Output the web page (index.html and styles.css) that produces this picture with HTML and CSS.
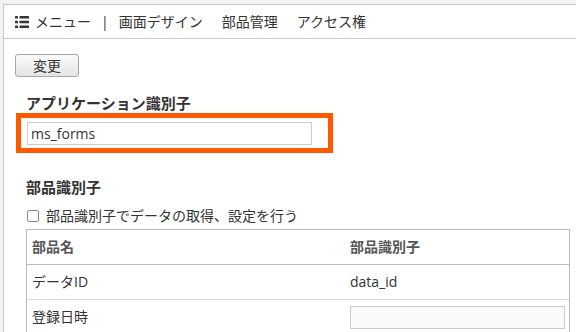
FILE: index.html
```html
<!DOCTYPE html>
<html lang="ja">
<head>
    <meta charset="UTF-8">
    <title>アプリケーション設定</title>
    <link rel="stylesheet" href="styles.css">
</head>
<body>
    <div class="panel">
        <div class="nav">
            <svg class="nav-icon" width="14" height="12" viewBox="0 0 14 12">
                <rect x="0" y="0" width="3" height="2.6" rx="0.6"/>
                <rect x="4.5" y="0" width="9.5" height="2.6" rx="0.6"/>
                <rect x="0" y="4.7" width="3" height="2.6" rx="0.6"/>
                <rect x="4.5" y="4.7" width="9.5" height="2.6" rx="0.6"/>
                <rect x="0" y="9.4" width="3" height="2.6" rx="0.6"/>
                <rect x="4.5" y="9.4" width="9.5" height="2.6" rx="0.6"/>
            </svg>
            <span class="nav-menu">メニュー</span>
            <span class="nav-sep">|</span>
            <span class="nav-item">画面デザイン</span>
            <span class="nav-item">部品管理</span>
            <span class="nav-item">アクセス権</span>
        </div>

        <div class="content">
            <button class="btn" type="button">変更</button>

            <div class="section">
                <div class="field-label">アプリケーション識別子</div>
                <div class="app-id-box">
                    <input class="app-id-input" type="text" value="ms_forms">
                </div>

                <div class="field-label sub-label">部品識別子</div>
                <label class="check-row">
                    <input class="check" type="checkbox">
                    <span>部品識別子でデータの取得、設定を行う</span>
                </label>

                <div class="parts-table">
                    <div class="row head">
                        <div class="cell-name">部品名</div>
                        <div class="cell-id">部品識別子</div>
                    </div>
                    <div class="row">
                        <div class="cell-name">データID</div>
                        <div class="cell-id">data_id</div>
                    </div>
                    <div class="row">
                        <div class="cell-name">登録日時</div>
                        <div class="cell-id"><input class="id-input" type="text"></div>
                    </div>
                </div>
            </div>
        </div>
    </div>
</body>
</html>
```

FILE: styles.css
```css
html, body {
    height: 100%;
    overflow: hidden;
}
body {
    margin: 0;
    padding: 4px 0 0 3px;
    box-sizing: border-box;
    background-color: #f2f2f2;
    font-family: 'Open Sans', 'Noto Sans CJK JP', sans-serif;
    font-size: 14px;
    color: #333;
}
.panel {
    background-color: #fff;
    border-top: 1px solid #c8c8c8;
    border-left: 1px solid #c8c8c8;
    min-height: 100%;
}
.nav {
    display: flex;
    align-items: center;
    height: 33px;
    padding-left: 11px;
    border-bottom: 1px solid #c8c8c8;
    line-height: 20px;
}
.nav-icon {
    fill: #333;
}
.nav-menu {
    margin-left: 6px;
}
.nav-sep {
    margin: 0 10px;
}
.nav-item + .nav-item {
    margin-left: 19px;
}
.content {
    padding: 15px 0 0 11px;
}
.btn {
    display: block;
    width: 64px;
    height: 23px;
    padding: 0;
    font-family: inherit;
    font-size: 14px;
    line-height: 20px;
    color: #333;
    background: linear-gradient(#fbfbfb, #e4e4e4);
    border: 1px solid #a8a8a8;
    border-radius: 3px;
}
.section {
    margin-left: 11px;
}
.field-label {
    margin-top: 16px;
    font-size: 15px;
    font-weight: bold;
    line-height: 20px;
    color: #333;
}
.sub-label {
    margin-top: 24px;
}
.app-id-box {
    margin-left: -10px;
    width: 317px;
    box-sizing: border-box;
    border: 5px solid #ff5a00;
    padding: 4px 16px 3px 6px;
}
.app-id-input {
    display: block;
    width: 100%;
    height: 23px;
    box-sizing: border-box;
    border: 1px solid #ccc;
    padding: 0 3px;
    font-family: inherit;
    font-size: 14px;
    color: #333;
    outline: none;
}
.check-row {
    display: flex;
    align-items: center;
    margin-top: 9px;
    height: 20px;
    line-height: 20px;
}
.check {
    appearance: none;
    width: 12px;
    height: 12px;
    margin: 0 7px 0 1px;
    border: 1px solid #8a8a8a;
    border-radius: 2px;
    background-color: #fff;
}
.parts-table {
    margin-top: 3px;
    width: 544px;
    box-sizing: border-box;
    border: 1px solid #bbb;
    border-bottom: none;
}
.row {
    display: grid;
    grid-template-columns: 317px 1fr;
    align-items: center;
    height: 35px;
    box-sizing: border-box;
    border-bottom: 1px solid #ddd;
    line-height: 20px;
}
.row.head {
    border-bottom-color: #bbb;
    font-weight: bold;
    color: #555;
}
.cell-name {
    padding-left: 5px;
}
.cell-id {
    padding: 0 4px 0 6px;
}
.id-input {
    display: block;
    width: 100%;
    height: 23px;
    box-sizing: border-box;
    border: 1px solid #ccc;
    background-color: #f9f9f9;
    outline: none;
}
```
